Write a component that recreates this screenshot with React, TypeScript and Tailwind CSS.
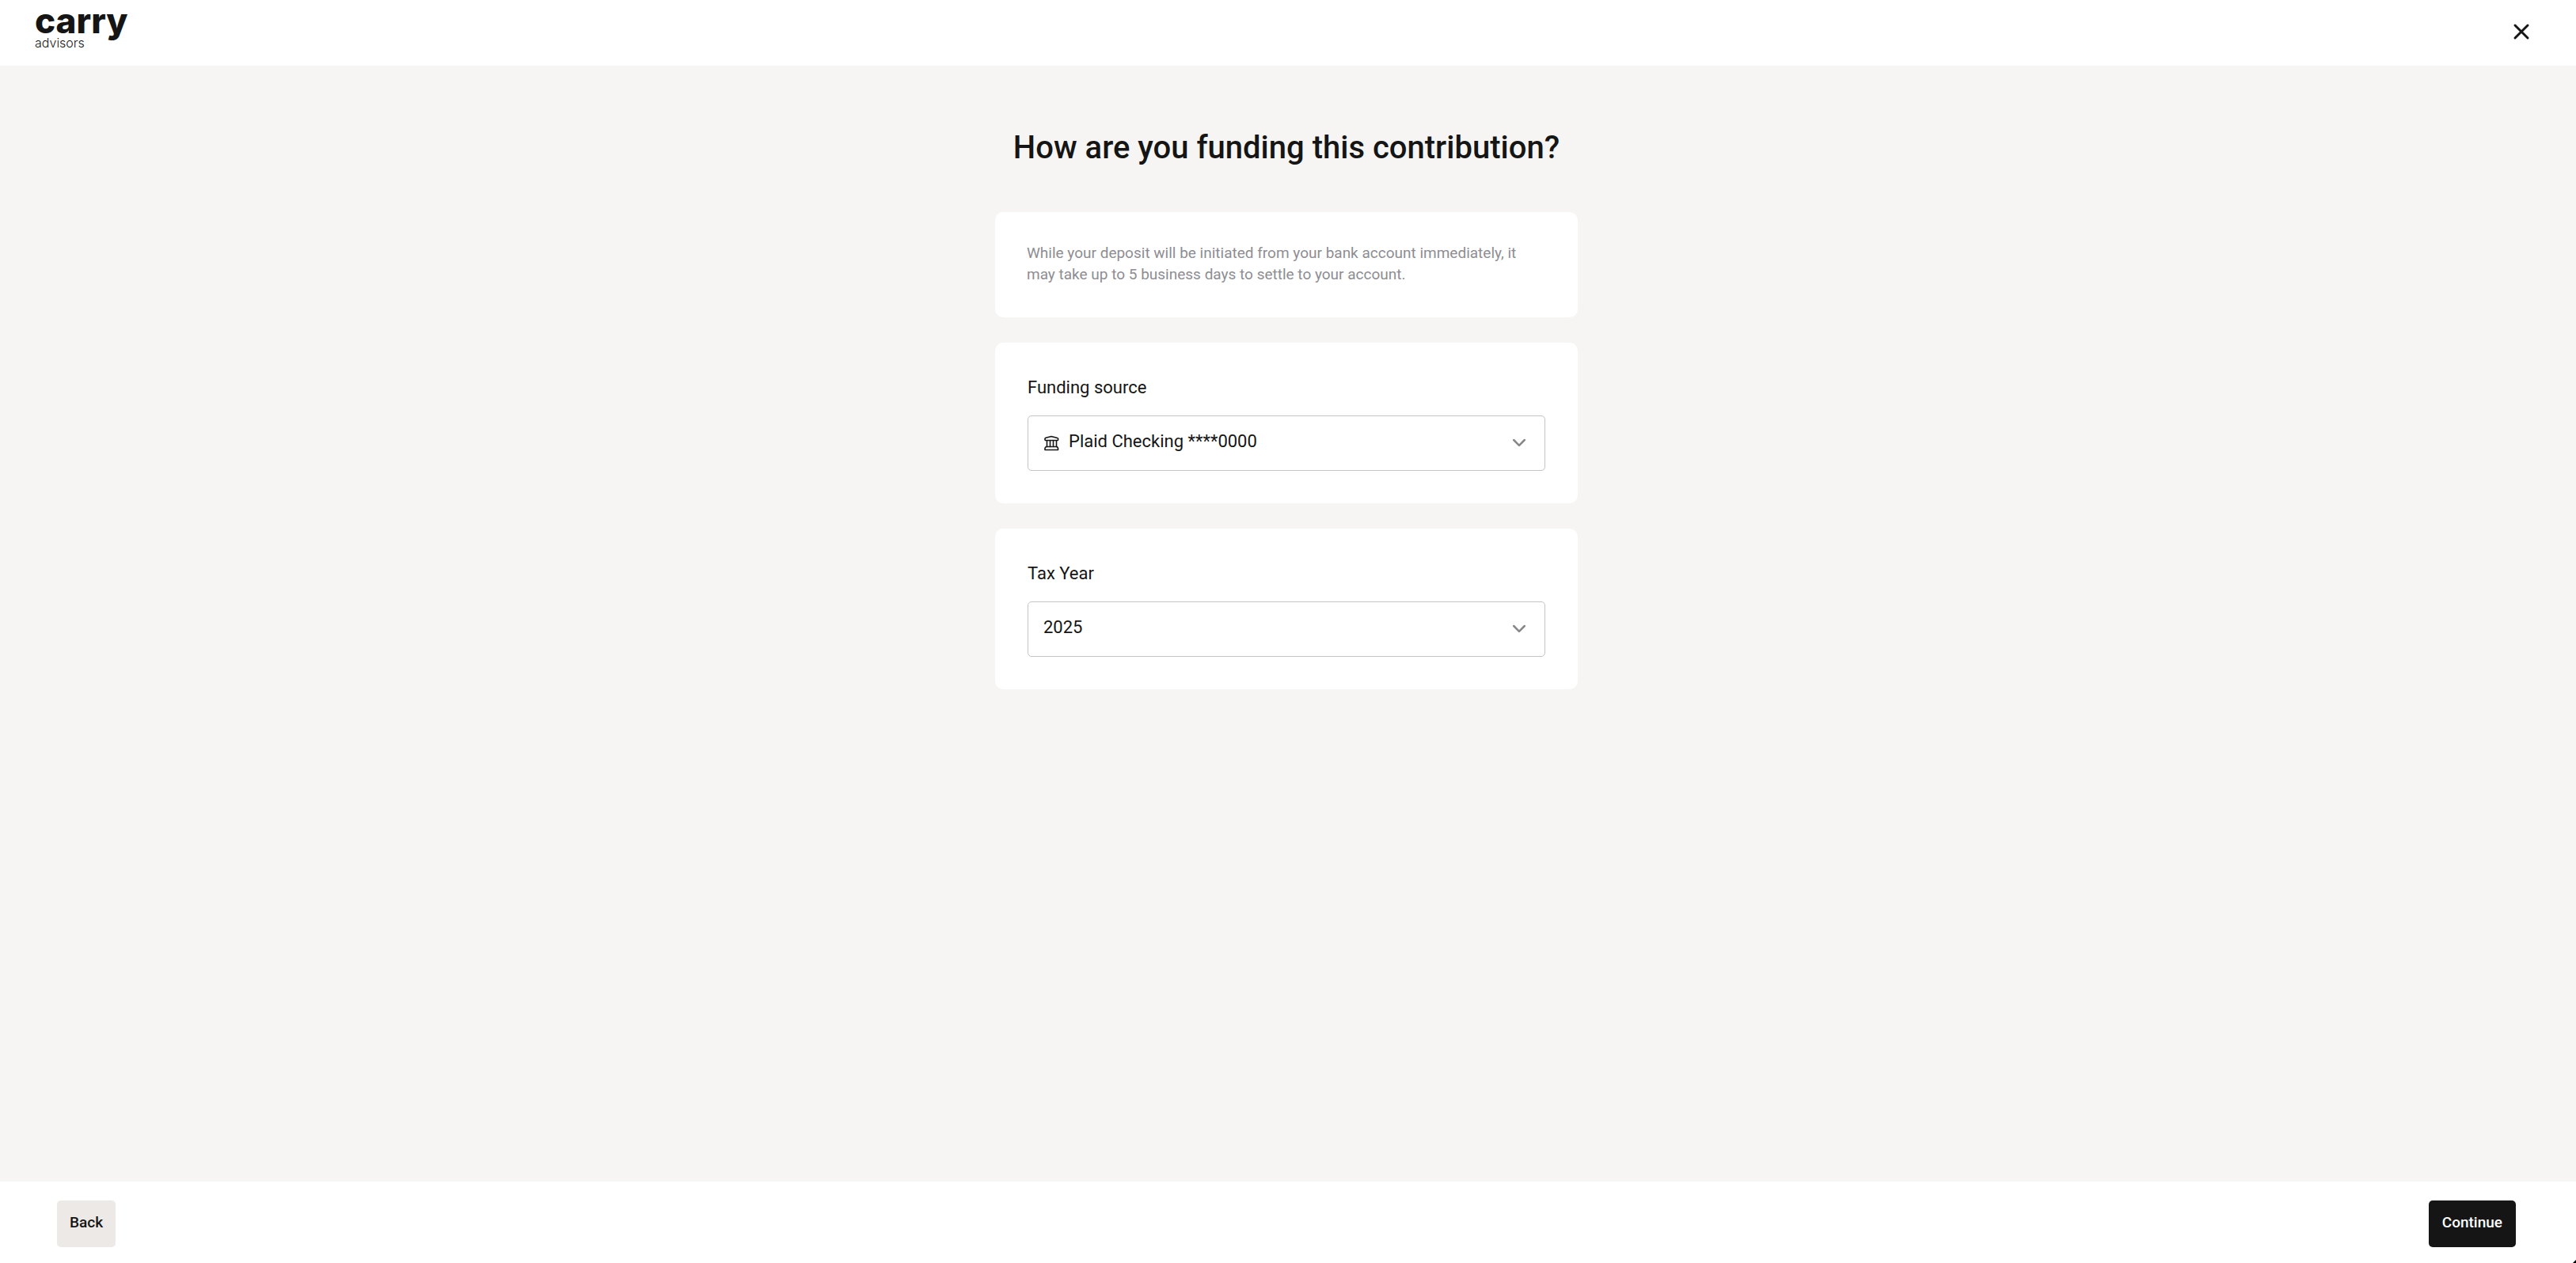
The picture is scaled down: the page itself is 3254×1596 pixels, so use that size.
import React, { useState } from 'react';

interface SelectFieldProps {
  id: string;
  label: string;
  options: string[];
  icon?: React.ReactNode;
}

const BankIcon = () => (
  <svg className="h-5 w-5" viewBox="0 0 20 20" fill="none" stroke="currentColor" strokeWidth="1.6" strokeLinecap="round" strokeLinejoin="round" aria-hidden="true">
    <path d="M2 4.5 Q2 3.5 3 3.2 L10 1.5 L17 3.2 Q18.6 3.5 18.6 4.5 V5.5 Q18.6 6.5 18 6.5 H2.6 Q2 6.5 2 5.5 Z" />
    <path d="M4.5 7v7.5M8.5 7v7.5M12.5 7v7.5M16.5 7v7.5" />
    <path d="M3.4 14.5h13.8l1.3 1.8v2.2h-16.5v-2.2z" />
  </svg>
);

const ChevronIcon = () => (
  <svg className="h-5 w-5" viewBox="0 0 20 20" fill="none" stroke="currentColor" strokeWidth="2.5" strokeLinecap="round" strokeLinejoin="round" aria-hidden="true">
    <path d="M3.2 6l6.8 6.8L16.8 6" />
  </svg>
);

const SelectField: React.FC<SelectFieldProps> = ({ id, label, options, icon }) => {
  const [value, setValue] = useState(options[0]);

  return (
    <div className="rounded-[10px] bg-white p-[41px]">
      <label htmlFor={id} className="block text-[22px] leading-[31px]">{label}</label>
      <div className="relative mt-5">
        {icon && <span className="pointer-events-none absolute inset-y-0 left-5 flex items-center">{icon}</span>}
        <select
          id={id}
          value={value}
          onChange={(e) => setValue(e.target.value)}
          className={`block h-[70px] w-full appearance-none rounded-[5px] border border-[#c4c4c4] bg-white pr-14 pb-[6px] text-[22px] focus:outline-none ${
            icon ? 'pl-[51px]' : 'pl-[19px]'
          }`}
        >
          {options.map((option) => (
            <option key={option}>{option}</option>
          ))}
        </select>
        <span className="pointer-events-none absolute inset-y-0 right-[23px] flex items-center text-[#86868b]">
          <ChevronIcon />
        </span>
      </div>
    </div>
  );
};

const App: React.FC = () => {
  return (
    <div className="relative flex min-h-screen flex-col overflow-hidden bg-[#f6f5f3] font-['Roboto',sans-serif] text-[#151515]">
      {/* Header */}
      <header className="flex h-[83px] items-start justify-between bg-white pr-[57px] pl-11">
        <a href="#" className="flex flex-col pt-[6px] font-['Inter',sans-serif]">
          <span className="text-[44px] leading-[40px] font-extrabold">carry</span>
          <span className="text-[16px] leading-[16px] font-light">advisors</span>
        </a>
        <button aria-label="Close" className="mt-7 flex h-6 w-6 items-center justify-center">
          <svg className="h-6 w-6" viewBox="0 0 24 24" fill="none" stroke="currentColor" strokeWidth="3" strokeLinecap="round">
            <path d="M4 4l16 16M20 4L4 20" />
          </svg>
        </button>
      </header>

      {/* Content */}
      <main className="flex flex-1 flex-col items-center pt-[78px] pr-1">
        <h1 className="text-[40px] leading-[52px] font-medium">How are you funding this contribution?</h1>
        <div className="mt-[55px] flex w-full max-w-[736px] flex-col gap-8">
          <p className="rounded-[10px] bg-white px-10 pt-[38px] pb-[41px] text-[19px] leading-[27px] text-[#8d8d92]">
            While your deposit will be initiated from your bank account immediately, it may take up to 5 business days to settle to your account.
          </p>
          <SelectField id="source" label="Funding source" options={['Plaid Checking ****0000']} icon={<BankIcon />} />
          <SelectField id="year" label="Tax Year" options={['2025', '2024']} />
        </div>
      </main>

      {/* Footer */}
      <footer className="flex h-[103px] items-start justify-between bg-white pt-6 pr-[76px] pl-[72px] text-[19px] font-medium">
        <button className="h-[59px] rounded-[5px] bg-[#ede9e6] px-4 pb-[2px]">Back</button>
        <button className="h-[59px] rounded-[5px] bg-[#151515] px-[17px] pb-[2px] text-white">Continue</button>
      </footer>

      {/* Edge of the help widget */}
      <svg className="absolute right-0 bottom-0 h-1 w-1" viewBox="0 0 4 4" fill="#000" aria-hidden="true">
        <path d="M4 0v4H0z" />
      </svg>
    </div>
  );
};

export default App;
